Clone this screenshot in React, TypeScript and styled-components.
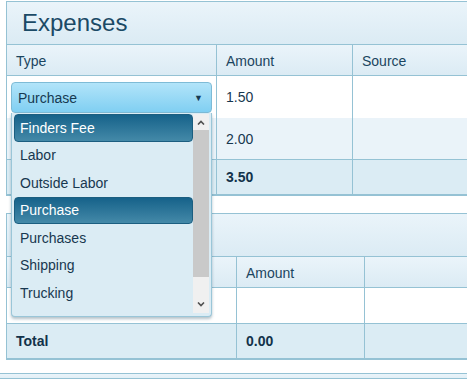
import styled, { createGlobalStyle } from 'styled-components';

const GlobalStyle = createGlobalStyle`
  html, body {
    margin: 0;
    padding: 0;
    background: #fff;
    overflow: hidden;
  }
  body {
    font-family: 'Liberation Sans', Arial, sans-serif;
    color: #17374f;
  }
`;

const options = ['Finders Fee', 'Labor', 'Outside Labor', 'Purchase', 'Purchases', 'Shipping', 'Trucking'];
const highlighted = ['Finders Fee', 'Purchase'];

const App = () => {
  return (
    <>
      <GlobalStyle />
      <Page>
        <Panel>
          <Title>Expenses</Title>
          <Grid $cols="210px 136px 1fr">
            <HeadCell>Type</HeadCell>
            <HeadCell>Amount</HeadCell>
            <HeadCell $last>Source</HeadCell>

            <Cell $h={42} $bg="#fff">
              <Select>
                <SelectBox>
                  <span>Purchase</span>
                  <Arrow>▼</Arrow>
                </SelectBox>
                <List>
                  <Items>
                    {options.map((o) => (
                      <Item key={o} $active={highlighted.includes(o)}>
                        {o}
                      </Item>
                    ))}
                  </Items>
                  <Scrollbar>
                    <ScrollBtn>
                      <Chevron viewBox="0 0 8 5">
                        <path d="M1 4.5 L4 1.5 L7 4.5" />
                      </Chevron>
                    </ScrollBtn>
                    <Thumb />
                    <ScrollBtn $bottom>
                      <Chevron viewBox="0 0 8 5">
                        <path d="M1 0.5 L4 3.5 L7 0.5" />
                      </Chevron>
                    </ScrollBtn>
                  </Scrollbar>
                </List>
              </Select>
            </Cell>
            <Cell $h={42} $bg="#fff">1.50</Cell>
            <Cell $h={42} $bg="#fff" $last />

            <Cell $h={41} $bg="#eaf3f9" />
            <Cell $h={41} $bg="#eaf3f9">2.00</Cell>
            <Cell $h={41} $bg="#eaf3f9" $last />

            <TotalCell>Total</TotalCell>
            <TotalCell>3.50</TotalCell>
            <TotalCell $last />
          </Grid>
        </Panel>

        <Panel>
          <Title />
          <Grid $cols="230px 128px 1fr">
            <HeadCell>Type</HeadCell>
            <HeadCell>Amount</HeadCell>
            <HeadCell $last />

            <Cell $h={35} $bg="#fff" />
            <Cell $h={35} $bg="#fff" />
            <Cell $h={35} $bg="#fff" $last />

            <TotalCell>Total</TotalCell>
            <TotalCell>0.00</TotalCell>
            <TotalCell $last />
          </Grid>
        </Panel>
      </Page>
      <NextPanel />
    </>
  );
};

export default App;

const Page = styled.div`
  padding: 1px 0 0 6px;
  display: flex;
  flex-direction: column;
  gap: 17px;
`;

const Panel = styled.div`
  width: 520px;
  border: 1px solid #95c2d4;
  border-bottom-width: 2px;
  background: #fff;
`;

const Title = styled.div`
  height: 43px;
  box-sizing: border-box;
  padding: 7px 0 0 15px;
  font-size: 24px;
  color: #1b4a66;
  background: linear-gradient(#eaf4fa, #dbebf4);
  border-bottom: 1px solid #95c2d4;
`;

const Grid = styled.div<{ $cols: string }>`
  display: grid;
  grid-template-columns: ${(p) => p.$cols};
`;

const HeadCell = styled.div<{ $last?: boolean }>`
  height: 31px;
  box-sizing: border-box;
  display: flex;
  align-items: center;
  padding: 2px 0 0 9px;
  font-size: 14px;
  color: #1b4560;
  background: linear-gradient(#eaf4fa, #dbebf4);
  border-bottom: 1px solid #95c2d4;
  border-right: ${(p) => (p.$last ? 'none' : '1px solid #95c2d4')};
`;

const Cell = styled.div<{ $h: number; $bg: string; $last?: boolean }>`
  position: relative;
  height: ${(p) => p.$h}px;
  box-sizing: border-box;
  display: flex;
  align-items: center;
  padding-left: 9px;
  font-size: 14px;
  color: #17374f;
  background: ${(p) => p.$bg};
  border-right: ${(p) => (p.$last ? 'none' : '1px solid #95c2d4')};
`;

const TotalCell = styled.div<{ $last?: boolean }>`
  height: 35px;
  box-sizing: border-box;
  display: flex;
  align-items: center;
  padding-left: 9px;
  font-size: 14px;
  font-weight: 700;
  color: #12324a;
  background: #dbecf4;
  border-top: 1px solid #95c2d4;
  border-right: ${(p) => (p.$last ? 'none' : '1px solid #95c2d4')};
`;

const Select = styled.div`
  position: absolute;
  top: 6px;
  left: 4px;
  width: 201px;
  z-index: 5;
`;

const SelectBox = styled.div`
  height: 31px;
  box-sizing: border-box;
  display: flex;
  align-items: center;
  justify-content: space-between;
  padding: 0 8px 0 6px;
  font-size: 14px;
  color: #163a52;
  border: 1px solid #7ebbd6;
  border-radius: 4px;
  background: linear-gradient(#b2e4f9, #80cff2);
`;

const Arrow = styled.span`
  font-size: 9px;
  color: #173a52;
`;

const List = styled.div`
  display: flex;
  height: 204px;
  box-sizing: border-box;
  padding: 1px 2px 3px 2px;
  background: #dbecf4;
  border: 1px solid #9ac6d8;
  border-top: none;
  border-radius: 0 0 4px 4px;
  box-shadow: 0 2px 3px rgba(40, 80, 100, 0.35);
`;

const Items = styled.div`
  flex: 1;
  display: flex;
  flex-direction: column;
`;

const Item = styled.div<{ $active?: boolean }>`
  height: 27.5px;
  box-sizing: border-box;
  display: flex;
  align-items: center;
  padding-left: 5px;
  font-size: 14px;
  color: ${(p) => (p.$active ? '#fff' : '#17374f')};
  border-radius: 4px;
  background: ${(p) => (p.$active ? 'linear-gradient(#16628a, #4489a8)' : 'transparent')};
  border: 1px solid ${(p) => (p.$active ? '#1b5e80' : 'transparent')};
`;

const Scrollbar = styled.div`
  width: 16px;
  display: flex;
  flex-direction: column;
  background: #f0f0f0;
`;

const ScrollBtn = styled.div<{ $bottom?: boolean }>`
  height: 16px;
  display: flex;
  align-items: ${(p) => (p.$bottom ? 'flex-end' : 'center')};
  padding-bottom: ${(p) => (p.$bottom ? '6px' : '0')};
  justify-content: center;
  margin-top: ${(p) => (p.$bottom ? 'auto' : '0')};
`;

const Chevron = styled.svg`
  width: 8px;
  height: 5px;
  fill: none;
  stroke: #505050;
  stroke-width: 1.6;
`;

const Thumb = styled.div`
  height: 147px;
  background: #c9c9c9;
`;

const NextPanel = styled.div`
  margin-top: 13px;
  height: 4px;
  border-top: 1px solid #95c2d4;
  border-bottom: 1px solid #95c2d4;
  background: linear-gradient(#eaf4fa, #e2eff6);
`;
